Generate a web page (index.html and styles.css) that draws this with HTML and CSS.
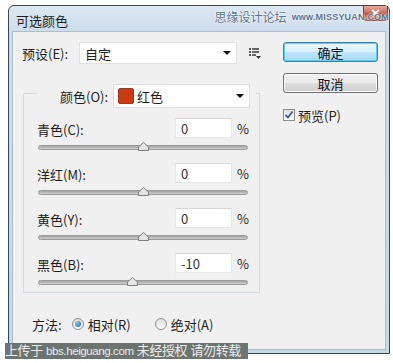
FILE: index.html
```html
<!DOCTYPE html>
<html lang="zh-CN">
<head>
    <meta charset="UTF-8">
    <meta name="viewport" content="width=device-width, initial-scale=1.0">
    <title>可选颜色</title>
    <link rel="stylesheet" href="styles.css">
</head>
<body>
    <div class="window">
        <div class="titlebar">
            <span class="title">可选颜色</span>
            <span class="close">
                <svg width="9" height="8" viewBox="0 0 9 8">
                    <path d="M1 1 L8 7 M8 1 L1 7" stroke="#fff" stroke-width="2"/>
                </svg>
            </span>
            <div class="site-mark">
                <span class="site-cn">思缘设计论坛</span>
                <span class="site-en">www.MISSYUAN.COM</span>
            </div>
        </div>

        <div class="client">
            <div class="main">
                <div class="preset-row">
                    <span class="preset-label">预设(E):</span>
                    <div class="dropdown preset">
                        <span>自定</span>
                        <span class="arrow"></span>
                    </div>
                    <svg class="preset-menu" width="12" height="11" viewBox="0 0 12 11">
                        <rect x="0" y="0" width="2" height="2" fill="#555"/>
                        <rect x="3" y="0" width="7" height="2" fill="#666"/>
                        <rect x="0" y="3" width="2" height="2" fill="#555"/>
                        <rect x="3" y="3" width="7" height="2" fill="#666"/>
                        <rect x="0" y="6" width="2" height="2" fill="#555"/>
                        <rect x="3" y="6" width="4" height="2" fill="#666"/>
                        <path d="M7 8 L12 8 L9.5 11 Z" fill="#333"/>
                    </svg>
                </div>

                <fieldset class="group" id="channels">
                    <legend>
                        <span class="color-label">颜色(O):</span>
                        <div class="dropdown colors">
                            <span class="swatch"></span>
                            <span>红色</span>
                            <span class="arrow"></span>
                        </div>
                    </legend>
                </fieldset>

                <div class="method">
                    <span class="method-label">方法:</span>
                    <span class="radio checked"></span>
                    <span class="radio-text">相对(R)</span>
                    <span class="radio"></span>
                    <span class="radio-text">绝对(A)</span>
                </div>
            </div>

            <div class="side">
                <button class="btn btn-default">确定</button>
                <button class="btn">取消</button>
                <div class="check">
                    <span class="box">
                        <svg width="10" height="10" viewBox="0 0 10 10">
                            <path d="M1.5 5 L4 7.5 L8.5 1.5" fill="none" stroke="#3d5a8f" stroke-width="1.8"/>
                        </svg>
                    </span>
                    <span>预览(P)</span>
                </div>
            </div>
        </div>
    </div>

    <div class="upload-mark">上传于 <span class="latin">bbs.heiguang.com</span> 未经授权 请勿转载</div>

    <script>
        const channels = [
            { name: '青色(C):', value: 0 },
            { name: '洋红(M):', value: 0 },
            { name: '黄色(Y):', value: 0 },
            { name: '黑色(B):', value: -10 }
        ];

        const trackWidth = 210;
        const group = document.getElementById('channels');

        channels.forEach(ch => {
            const left = 1 + (ch.value + 100) / 200 * trackWidth - 5.5;
            const row = document.createElement('div');
            row.className = 'slider';
            row.innerHTML = `
                <div class="slider-head">
                    <span class="slider-label">${ch.name}</span>
                    <input class="slider-input" type="text" value="${ch.value}">
                    <span class="pct">%</span>
                </div>
                <div class="slider-bar">
                    <div class="track"></div>
                    <svg class="thumb" style="left: ${left}px" width="11" height="9" viewBox="0 0 11 9">
                        <path d="M5.5 0.5 L10.5 5 L10.5 8.5 L0.5 8.5 L0.5 5 Z" fill="#e4e4e4" stroke="#7d7d7d"/>
                    </svg>
                </div>
            `;
            group.appendChild(row);
        });
    </script>
</body>
</html>
```

FILE: styles.css
```css
body {
    margin: 0;
    height: 363px;
    overflow: hidden;
    position: relative;
    background-color: #fff;
    font-family: "Noto Sans CJK SC", sans-serif;
    font-size: 13px;
    color: #1e1e1e;
}

.window {
    margin: 5px 0 0 8px;
    width: 382px;
    height: 349px;
    box-sizing: border-box;
    border: 1px solid #3b4650;
    border-radius: 6px 6px 0 0;
    padding: 0 3px 3px;
    display: flex;
    flex-direction: column;
    background: linear-gradient(to bottom, #dce8f3 0, #cbdcec 28px, #bfd9e8 100%);
}

.titlebar {
    height: 25px;
    position: relative;
    display: flex;
    align-items: center;
    padding: 3px 0 0 4px;
    box-sizing: border-box;
}

.title {
    font-size: 13px;
    color: #1e1e1e;
}

.close {
    position: absolute;
    top: 0;
    right: -2px;
    width: 25px;
    height: 15px;
    border: 1px solid #7a3b33;
    border-top: none;
    border-radius: 0 0 4px 4px;
    box-sizing: border-box;
    background: linear-gradient(to bottom, #e8a99c 0, #d0705f 45%, #c0452f 55%, #d77a5e 100%);
    display: flex;
    align-items: center;
    justify-content: center;
}

.site-mark {
    position: absolute;
    top: 2px;
    right: -3px;
    display: flex;
    align-items: center;
    gap: 5px;
    color: #5a7190;
    text-shadow: 0 0 2px #fff, 0 0 2px #fff;
}

.site-cn {
    font-size: 12px;
}

.site-en {
    font-family: "Liberation Sans", sans-serif;
    font-size: 9px;
    font-weight: bold;
    letter-spacing: 0.2px;
}

.client {
    flex: 1;
    display: flex;
    background-color: #f0f0f0;
    border: 1px solid #a9c0d0;
    padding: 10px 7px 0 9px;
}

.main {
    width: 240px;
}

.preset-row {
    display: flex;
    align-items: center;
    height: 22px;
}

.preset-label {
    width: 57px;
}

.dropdown {
    display: flex;
    align-items: center;
    box-sizing: border-box;
    background-color: #fff;
    border: 1px solid #e0e0e0;
    padding: 0 5px;
}

.dropdown .arrow {
    margin-left: auto;
    width: 0;
    height: 0;
    border-left: 4px solid transparent;
    border-right: 4px solid transparent;
    border-top: 4px solid #111;
}

.preset {
    width: 158px;
    height: 22px;
}

.preset-menu {
    margin-left: 12px;
}

.group {
    margin: 14px 0 0 1px;
    width: 237px;
    min-width: 0;
    box-sizing: border-box;
    padding: 10px 11px 3px 13px;
    border: 1px solid #d3d9de;
}

.group legend {
    display: flex;
    align-items: center;
    padding: 6px 6px 0 23px;
}

.color-label {
    width: 53px;
    flex-shrink: 0;
}

.colors {
    width: 137px;
    height: 24px;
    flex-shrink: 0;
    padding: 0 5px 0 4px;
}

.swatch {
    width: 16px;
    height: 16px;
    box-sizing: border-box;
    border: 1px solid #9a3a1e;
    border-radius: 2px;
    background-color: #cc3a12;
    margin-right: 3px;
}

.slider {
    margin-bottom: 9px;
}

.slider:last-child {
    margin-bottom: 0;
}

.slider-head {
    display: flex;
    align-items: center;
    height: 20px;
}

.slider-label {
    flex: 1;
    padding-top: 3px;
}

.slider-input {
    width: 57px;
    height: 20px;
    box-sizing: border-box;
    border: 1px solid #e6e6e6;
    border-top-color: #d6d6d6;
    padding: 0 5px;
    font-family: inherit;
    font-size: 13px;
    color: #333;
    background-color: #fff;
}

.pct {
    width: 11px;
    margin-left: 5px;
}

.slider-bar {
    position: relative;
    height: 16px;
}

.track {
    position: absolute;
    left: 1px;
    right: 0;
    top: 7px;
    height: 5px;
    box-sizing: border-box;
    border: 1px solid #9a9a9a;
    border-radius: 3px;
    background: linear-gradient(to bottom, #a2a2a2, #d0d0d0);
}

.thumb {
    position: absolute;
    top: 4px;
}

.method {
    display: flex;
    align-items: center;
    height: 18px;
    margin: 22px 0 0 10px;
}

.method-label {
    margin-right: 10px;
}

.radio {
    width: 12px;
    height: 12px;
    box-sizing: border-box;
    border: 1px solid #8f8f8f;
    border-radius: 50%;
    background: linear-gradient(to bottom, #dedede, #fafafa);
    display: flex;
    align-items: center;
    justify-content: center;
    margin-right: 4px;
}

.radio.checked::after {
    content: "";
    width: 6px;
    height: 6px;
    border-radius: 50%;
    background: radial-gradient(circle at 35% 35%, #8cc9f2, #1f5c9a);
}

.radio-text {
    margin-right: 24px;
}

.side {
    margin-left: auto;
    width: 95px;
    display: flex;
    flex-direction: column;
}

.btn {
    height: 20px;
    padding: 0;
    font-family: inherit;
    font-size: 13px;
    color: #111;
    border: 1px solid #707070;
    border-radius: 3px;
    background: linear-gradient(to bottom, #f2f2f2 0, #ebebeb 50%, #dddddd 51%, #cfcfcf 100%);
    box-shadow: inset 0 0 0 1px #fbfbfb;
}

.btn-default {
    border-color: #3c7fb1;
    background: linear-gradient(to bottom, #eaf6fd 0, #d9f0fc 50%, #bee6fd 51%, #a7d9f5 100%);
    box-shadow: inset 0 0 0 1px #5fcbf6;
}

.btn + .btn {
    margin-top: 11px;
}

.check {
    display: flex;
    align-items: center;
    margin-top: 15px;
    height: 14px;
}

.check .box {
    width: 12px;
    height: 12px;
    box-sizing: border-box;
    border: 1px solid #8f8f8f;
    background: linear-gradient(to bottom, #e0e0e0, #fbfbfb);
    display: flex;
    align-items: center;
    justify-content: center;
    margin-right: 3px;
}

.upload-mark {
    position: absolute;
    left: 5px;
    top: 343px;
    width: 243px;
    height: 16px;
    line-height: 16px;
    background-color: #6c7470;
    color: #ececec;
    font-family: "Liberation Sans", "Noto Sans CJK SC", sans-serif;
    font-size: 13px;
    letter-spacing: -0.4px;
    white-space: nowrap;
    overflow: hidden;
}

.upload-mark .latin {
    font-size: 11.5px;
}
```
